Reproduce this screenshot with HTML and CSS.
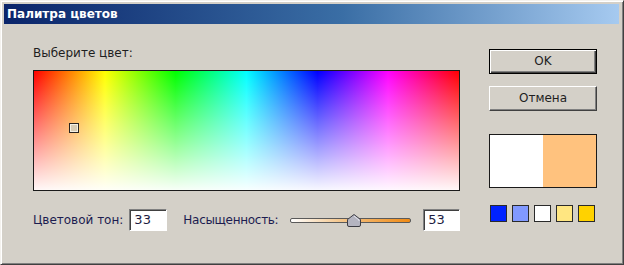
FILE: index.html
```html
<!DOCTYPE html>
<html lang="ru">
  <head>
    <meta charset="UTF-8" />
    <title>Палитра цветов</title>
    <link rel="stylesheet" href="styles.css">
  </head>
  <body>
    <div class="window">
      <div class="titlebar">Палитра цветов</div>
      <div class="content">
        <div class="left-col">
          <div class="pick-label">Выберите цвет:</div>
          <div class="spectrum">
            <div class="marker"></div>
          </div>
          <div class="controls">
            <span class="field-label">Цветовой тон:</span>
            <div class="num-input hue-input">33</div>
            <span class="field-label sat-label">Насыщенность:</span>
            <div class="slider">
              <div class="slider-track"></div>
              <svg class="slider-thumb" width="14" height="13" viewBox="0 0 14 13">
                <path d="M7 0.5 L13.5 5.5 L13.5 11 Q13.5 12.5 12 12.5 L2 12.5 Q0.5 12.5 0.5 11 L0.5 5.5 Z" fill="#b4b4c0" stroke="#3c3c44" stroke-width="1" />
                <path d="M7 2 L12 6 L12 7" fill="none" stroke="#e6e6ee" stroke-width="1" />
              </svg>
            </div>
            <div class="num-input sat-input">53</div>
          </div>
        </div>
        <div class="right-col">
          <div class="btn btn-default">OK</div>
          <div class="btn">Отмена</div>
          <div class="preview">
            <div class="preview-old"></div>
            <div class="preview-new"></div>
          </div>
          <div class="swatches">
            <div class="swatch swatch-blue"></div>
            <div class="swatch swatch-lightblue"></div>
            <div class="swatch swatch-white"></div>
            <div class="swatch swatch-paleyellow"></div>
            <div class="swatch swatch-yellow"></div>
          </div>
        </div>
      </div>
    </div>
  </body>
</html>
```

FILE: styles.css
```css
body {
  margin: 0;
  background: #d4d0c8;
  font-family: "DejaVu Sans", Verdana, sans-serif;
  font-size: 12px;
  color: #1e1e1e;
}
.window {
  width: 624px;
  height: 265px;
  box-sizing: border-box;
  background: #d4d0c8;
  border: 1px solid;
  border-color: #f4f2ee #404040 #404040 #f4f2ee;
  box-shadow: inset 1px 1px 0 #ffffff, inset -1px -1px 0 #808080;
  padding: 3px 4px 3px 3px;
}
.titlebar {
  height: 20px;
  line-height: 20px;
  padding-left: 3px;
  color: #ffffff;
  font-weight: bold;
  font-size: 12px;
  background: linear-gradient(to right, #0a246a, #3a6ea5 55%, #a6caf0);
}
.content {
  display: flex;
  padding: 23px 0 0 29px;
}
.left-col {
  width: 427px;
  flex: none;
}
.pick-label {
  line-height: 13px;
  height: 13px;
  margin-bottom: 10px;
}
.spectrum {
  position: relative;
  width: 427px;
  height: 121px;
  box-sizing: border-box;
  border: 1px solid #1a1a1a;
  background:
    linear-gradient(to bottom, rgba(255, 255, 255, 0), rgba(255, 255, 255, 0.97)),
    linear-gradient(to right, #ff0000, #ffff00 16.7%, #00ff00 33.3%, #00ffff 50%, #0000ff 66.7%, #ff00ff 83.3%, #ff0000);
}
.marker {
  position: absolute;
  left: 35px;
  top: 52px;
  width: 10px;
  height: 10px;
  box-sizing: border-box;
  border: 1px solid #2a2420;
  box-shadow: inset 0 0 0 1px #f4f0e4;
  background: #d8ccb4;
}
.controls {
  display: flex;
  align-items: center;
  margin-top: 18px;
  white-space: nowrap;
}
.controls > * {
  flex: none;
}
.field-label {
  color: #1c1c50;
}
.num-input {
  width: 38px;
  height: 22px;
  box-sizing: border-box;
  border: 1px solid;
  border-color: #808080 #ffffff #ffffff #808080;
  box-shadow: inset 1px 1px 0 #404040;
  background: #ffffff;
  line-height: 20px;
  padding-left: 4px;
  font-size: 13px;
  color: #1c1c40;
}
.hue-input {
  margin-left: 6px;
}
.sat-label {
  margin-left: 16px;
  letter-spacing: -0.3px;
}
.slider {
  position: relative;
  width: 121px;
  height: 14px;
  margin-left: 12px;
  display: flex;
  align-items: center;
}
.slider-track {
  width: 100%;
  height: 5px;
  box-sizing: border-box;
  border: 1px solid #5a5a5a;
  border-radius: 2px;
  background: linear-gradient(to right, #ffffff, #f4c890 40%, #f08a14);
}
.slider-thumb {
  position: absolute;
  left: 57px;
  top: 1px;
}
.controls .sat-input {
  margin-left: 12px;
  width: 37px;
}
.right-col {
  margin-left: 29px;
  width: 108px;
  flex: none;
}
.btn {
  height: 25px;
  box-sizing: border-box;
  border: 1px solid;
  border-color: #ffffff #404040 #404040 #ffffff;
  box-shadow: inset -1px -1px 0 #808080;
  text-align: center;
  line-height: 22px;
  margin-top: 12px;
}
.btn-default {
  margin-top: 2px;
  border: 1px solid #000000;
  box-shadow: inset 1px 1px 0 #ffffff, inset -1px -1px 0 #404040, inset -2px -2px 0 #808080;
}
.preview {
  display: flex;
  height: 54px;
  margin-top: 23px;
  box-sizing: border-box;
  border: 1px solid #1a1a1a;
}
.preview-old {
  flex: 1;
  background: #ffffff;
}
.preview-new {
  flex: 1;
  background: #ffc27e;
}
.swatches {
  display: flex;
  gap: 5px;
  margin-top: 17px;
  padding-left: 1px;
}
.swatch {
  width: 17px;
  height: 17px;
  box-sizing: border-box;
  border: 1px solid #2a2a2a;
}
.swatch-blue {
  background: #0022ff;
}
.swatch-lightblue {
  background: #8199ff;
}
.swatch-white {
  background: #ffffff;
}
.swatch-paleyellow {
  background: #ffe681;
}
.swatch-yellow {
  background: #ffd200;
}
```
